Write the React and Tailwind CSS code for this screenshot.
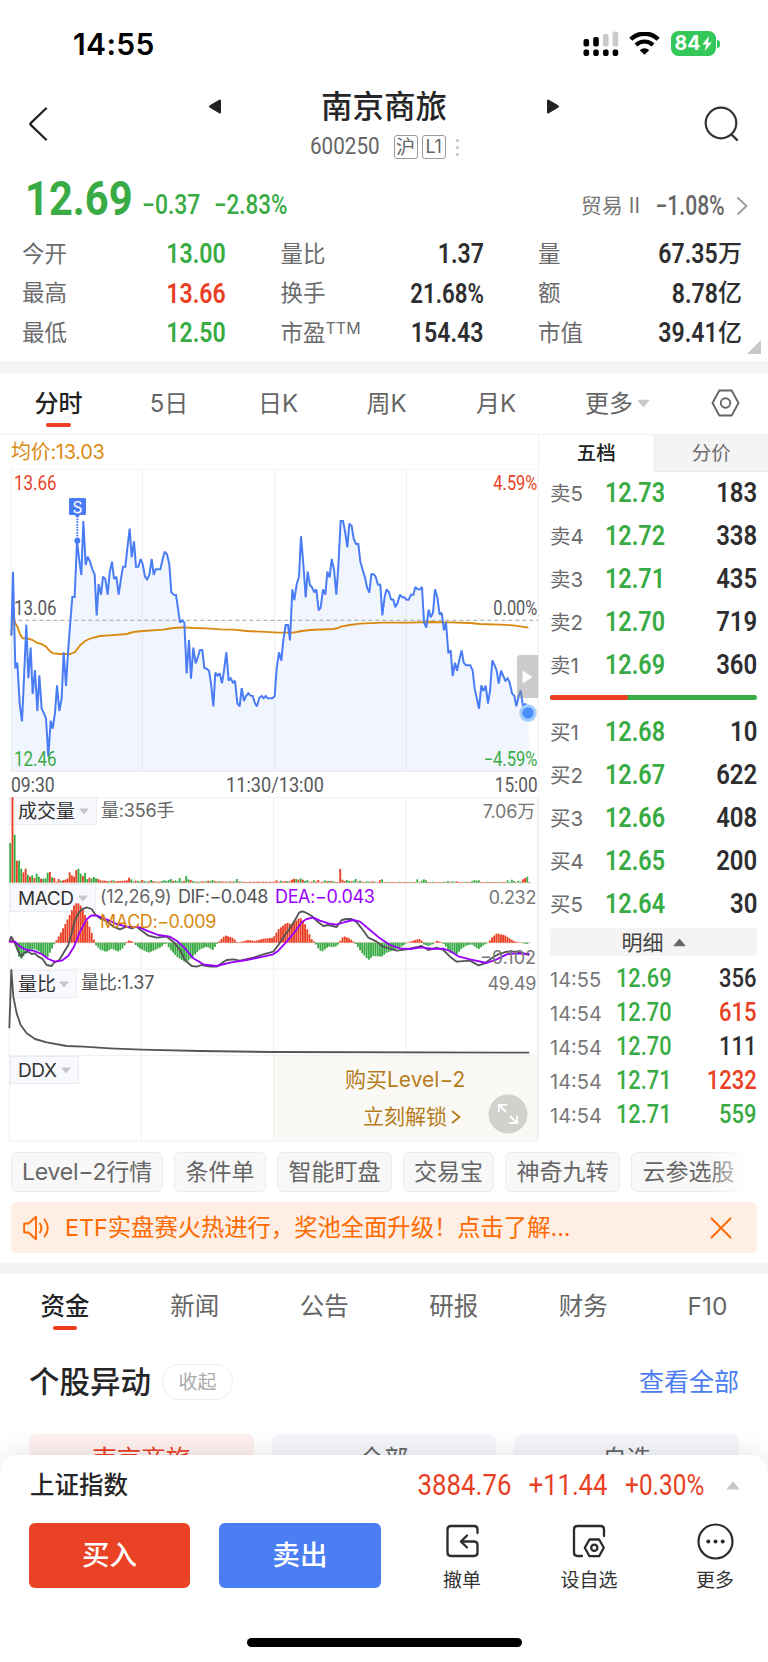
import React from "react";

const GREEN = "text-[#39ab44]";
const RED = "text-[#e93f24]";
const DARK = "text-[#2e2e30]";

const PRICE =
  "34,527 39,335 46,625 52,608 59,730 66,784 72,655 79,494 85,655 92,563 98,702 105,630 112,753 118,646 125,746 131,758 138,775 145,890 152,782 158,806 165,758 171,676 178,753 185,715 191,577 198,678 204,577 211,485 217,411 224,411 231,242 237,295 244,345 250,183 257,315 263,290 270,305 277,328 284,343 290,466 296,372 303,404 309,350 316,357 323,404 329,338 336,305 342,357 349,350 356,404 362,362 369,320 376,320 382,265 389,206 395,292 402,244 408,320 415,320 422,297 428,312 435,350 441,358 448,345 455,297 461,345 467,328 481,328 488,298 494,275 501,283 508,313 514,397 521,404 528,405 534,445 540,488 547,481 553,488 560,640 567,540 573,656 580,563 587,610 593,593 600,570 607,570 613,624 620,626 627,632 633,670 640,739 646,638 653,647 659,640 666,670 672,632 679,577 686,662 692,655 699,668 705,662 712,730 719,739 725,684 732,723 738,708 745,700 752,707 758,708 765,730 771,739 778,714 785,708 791,715 797,708 804,715 817,715 824,709 830,625 837,577 844,602 850,540 857,495 864,495 870,541 877,388 883,420 890,373 897,350 903,229 910,312 917,412 923,335 930,375 936,382 943,397 949,388 956,451 962,443 969,388 976,404 982,335 989,352 995,297 1002,328 1009,404 1015,320 1022,183 1029,183 1035,213 1042,262 1048,191 1055,198 1061,236 1068,252 1075,252 1081,305 1088,330 1095,352 1101,382 1108,398 1114,343 1121,343 1127,350 1134,374 1141,374 1147,466 1154,410 1160,388 1167,397 1173,418 1180,419 1186,442 1193,427 1200,404 1207,412 1213,412 1220,419 1226,419 1233,404 1240,404 1246,381 1253,388 1260,388 1266,381 1272,487 1279,503 1286,449 1292,472 1299,458 1305,388 1312,412 1319,464 1325,458 1332,511 1338,487 1345,579 1352,571 1358,648 1365,608 1371,632 1378,600 1385,571 1391,608 1398,616 1411,616 1418,632 1424,686 1431,718 1437,746 1444,676 1450,693 1457,677 1464,731 1470,693 1477,601 1484,616 1490,632 1496,671 1503,632 1510,648 1516,662 1523,655 1529,668 1536,700 1543,708 1549,739 1556,708 1562,691 1569,739 1576,731 1585,760";
const AVG =
  "34,525 39,455 45,488 52,500 60,522 68,535 78,535 88,537 98,540 110,548 125,552 138,560 150,574 160,580 185,582 210,582 225,576 240,556 255,543 275,534 300,528 330,526 380,522 400,516 430,513 490,509 520,504 550,502 580,504 620,505 660,508 700,509 740,513 780,515 837,518 880,518 905,513 930,510 1000,507 1016,504 1022,500 1050,495 1080,491 1150,488 1230,488 1290,486 1350,487 1410,489 1440,492 1500,494 1540,496 1585,503";
const DIF =
  "28,470 34,455 45,475 55,500 65,515 72,503 85,500 95,507 105,505 115,515 128,522 140,540 155,543 162,533 178,525 190,505 205,480 215,445 225,405 235,385 245,373 260,367 275,372 285,388 300,400 320,408 340,425 360,433 380,425 395,430 410,425 425,437 445,452 470,458 500,455 520,470 540,495 555,525 575,543 590,545 605,540 630,545 650,545 665,535 680,525 700,523 720,527 760,518 790,508 820,500 835,480 855,450 870,430 885,405 898,382 908,379 920,384 935,393 955,412 970,423 985,420 1010,426 1025,405 1040,402 1055,402 1070,412 1085,430 1105,458 1130,470 1150,485 1190,497 1220,493 1265,483 1285,495 1310,488 1330,495 1350,515 1370,530 1410,527 1435,541 1455,535 1475,520 1495,508 1520,500 1550,500 1588,510";
const DEA =
  "28,470 45,470 60,485 80,495 100,497 125,507 145,522 165,530 185,527 205,512 222,485 240,440 260,403 275,391 290,392 320,403 350,417 380,425 420,427 440,437 475,450 510,455 530,467 555,490 580,520 610,538 650,543 690,533 740,525 790,515 820,508 835,497 860,470 885,440 905,412 920,402 940,398 960,407 985,415 1010,419 1035,411 1060,405 1080,410 1110,435 1140,460 1170,480 1200,490 1230,492 1265,487 1300,492 1330,491 1350,498 1375,514 1410,523 1460,534 1490,523 1520,508 1550,505 1588,507";
const RATIO =
  "28,730 34,555 40,635 50,685 62,720 80,745 105,762 140,772 200,783 250,785 330,790 425,794 600,798 820,801 1588,803";

const VOLUME = [
  "g119", "r256", "g144", "r66", "g66", "g42", "r31", "r42", "g24", "r18", "g22", "r14", "g27", "g18", "r12", "g12", "g13", "g30", "r32", "g16", "r14", "r3",
  "r11", "g6", "r7", "r9", "r12", "r31", "r22", "r18", "r38", "g42", "g27", "r20", "g29", "g11", "r15", "g12", "g17", "g13", "r11", "r7", "r6", "r6", "r5", "g4",
  "r6", "g7", "r4", "r5", "r5", "r6", "r6", "r7", "r15", "g10", "g4", "r6", "g5", "g4", "r8", "g5", "g3", "r4", "g8", "r5", "g3", "r3", "r3", "g5", "g7", "g5",
  "g8", "g11", "r5", "g7", "g5", "g14", "g4", "r5", "g20", "g10", "r8", "g5", "g3", "r3", "g3", "r4", "r3", "g4", "r6", "g5", "g8", "r4", "r3", "g4", "r4",
  "r3", "r3", "g3", "r4", "r3", "g4", "g11", "r3", "g3", "r3", "r2", "r2", "r3", "r2", "r3", "r3", "r3", "r2", "r3", "r3", "r2", "r3", "r2", "r3", "r7",
  "r3", "g6", "r3", "r5", "g5", "r4", "r9", "r12", "g11", "r9", "g13", "r9", "g5", "g8", "r3", "r3", "g7", "r3", "r8", "r2", "r3", "g7", "r4", "g5", "r5",
  "g4", "r2", "r2", "r41", "r9", "r5", "g8", "g5", "r4", "g6", "g11", "r3", "g6", "r3", "r2", "g4", "g3", "r3", "r4", "g3", "r2", "r7", "g10", "r2",
];
const LATE = { 185: "g10", 187: "g6", 188: "g10", 189: "g7", 199: "g5", 201: "g4", 203: "r4", 210: "g5", 211: "g8", 212: "g6", 213: "g7", 226: "g7", 228: "g9", 229: "g5", 231: "g6", 233: "r10", 234: "r14", 235: "g18" };

const HIST = [
  [28, 0], [34, 22], [40, 4], [47, -10], [60, -52], [75, -35], [100, -18], [120, -28], [140, -48], [160, -10], [165, 0], [185, 35], [205, 75], [225, 118],
  [235, 118], [245, 108], [262, 65], [280, 15], [285, -5], [300, -20], [318, -28], [335, -18], [355, -27], [370, -15], [378, 0], [385, 7], [398, 4],
  [402, -3], [420, -18], [445, -30], [465, -22], [485, -12], [497, 0], [510, -20], [530, -42], [558, -60], [575, -45], [600, -20], [620, -12], [638, -22],
  [650, -5], [655, 2], [675, 22], [700, 14], [712, 0], [745, 8], [765, 5], [790, 12], [820, 15], [835, 40], [860, 60], [875, 55], [900, 76], [915, 55],
  [935, 10], [945, 0], [955, -18], [965, -28], [985, -12], [1005, -13], [1015, -5], [1020, 5], [1030, 20], [1050, 12], [1062, 2], [1070, -8], [1085, -30],
  [1105, -52], [1120, -40], [1145, -42], [1160, -30], [1200, -15], [1222, 0], [1245, 8], [1262, 12], [1270, -5], [1285, -10], [1300, -4], [1310, 6],
  [1325, 1], [1335, -8], [1350, -30], [1370, -35], [1385, -18], [1400, -8], [1415, -5], [1435, -20], [1450, -8], [1465, 0], [1475, 15], [1490, 28],
  [1515, 22], [1540, 5], [1560, 0], [1588, -5],
];
function histAt(x) {
  for (let i = 1; i < HIST.length; i++) {
    if (x <= HIST[i][0]) {
      const [x0, y0] = HIST[i - 1];
      const [x1, y1] = HIST[i];
      return y0 + ((y1 - y0) * (x - x0)) / (x1 - x0);
    }
  }
  return 0;
}
const BAR_COUNT = 237;
const BARS = Array.from({ length: BAR_COUNT }, (_, i) => i);
function volumeAt(i) {
  return LATE[i] || VOLUME[i] || (i % 5 === 2 ? "g3" : "r2");
}

function Num({ children, className = "" }) {
  return (
    <span className={`inline-block whitespace-nowrap font-['Roboto','Noto_Sans_CJK_SC',sans-serif] leading-none ${className}`}>
      {children}
    </span>
  );
}

function Caret({ className = "" }) {
  return (
    <svg viewBox="0 0 12 8" className={className}>
      <path d="M1 1h10L6 7z" fill="currentColor" stroke="currentColor" strokeLinejoin="round" />
    </svg>
  );
}

function StatusBar() {
  return (
    <div className="flex h-[87px] items-center pl-[73px] pr-[48px] text-black">
      <span className="w-[90px] text-[30px] font-semibold leading-none tracking-[.012em]">14:55</span>
      <svg className="ml-auto h-[26px] w-[36px]" viewBox="0 0 36 26">
        <g fill="#000">
          <rect x="0.5" y="8" width="5.6" height="7.5" rx="2" />
          <rect x="10.2" y="6" width="5.6" height="9.5" rx="2" />
          <rect x="0.5" y="18.5" width="5.6" height="6.5" rx="2" />
          <rect x="10.2" y="18.5" width="5.6" height="6.5" rx="2" />
          <rect x="20" y="18.5" width="5.6" height="6.5" rx="2" />
          <rect x="29.6" y="18.5" width="5.6" height="6.5" rx="2" />
        </g>
        <rect x="20" y="3" width="5.6" height="12.5" rx="2" fill="#c9c9c9" />
        <rect x="29.6" y="0.5" width="5.6" height="15" rx="2" fill="#c9c9c9" />
      </svg>
      <svg className="ml-[10px] h-[23px] w-[31px]" viewBox="0 0 31 23">
        <path d="M1.800 7.300a19.600 19.600 0 0 1 27.400 0" fill="none" stroke="#000" strokeWidth="4.400" />
        <path d="M7 13a12.200 12.200 0 0 1 17 0" fill="none" stroke="#000" strokeWidth="4" />
        <path d="M10.800 18.200a6.800 6.800 0 0 1 9.400 0L15.500 22.800z" />
      </svg>
      <div className="ml-[11px] flex items-center">
        <div className="flex h-[25px] w-[45px] items-center justify-center rounded-[7.5px] bg-[#34c759] text-[19.500px] font-bold leading-none text-white">
          84
          <svg className="ml-[2px] h-[15px] w-[10px]" viewBox="0 0 10 15">
            <path d="M7.200 0L.2 8.400h3.900L2.800 15l7-8.500H5.900z" fill="#fff" />
          </svg>
        </div>
        <div className="ml-[1px] h-[8px] w-[3px] rounded-r-full bg-[#34c759]" />
      </div>
    </div>
  );
}

function NavBar() {
  return (
    <header className="flex h-[84px] px-[28px] text-[#262628]">
      <svg className="mt-[20px] h-[34px] w-[20px]" viewBox="0 0 20 34">
        <path d="M18 1.500L3 15.800Q1.800 17 3 18.200L18 32.500" fill="none" stroke="#222" strokeWidth="2.300" strokeLinecap="round" />
      </svg>
      <div className="ml-[160px] flex w-[352px] justify-between">
        <svg className="mt-[11px] h-[17px] w-[14px]" viewBox="0 0 14 17">
          <path d="M12.500 2.500v12q0 1-1 .4L1.800 9.200q-1-.7 0-1.400L11.500 2.100q1-.6 1 .4z" fill="#222" stroke="#222" />
        </svg>
        <div className="flex flex-col items-center">
          <h1 className="mt-[3px] text-[31.500px] font-medium leading-[34px]">南京商旅</h1>
          <div className="mt-[11px] flex h-[24px] items-center text-[#666]">
            <span className="w-[70px]">
              <Num className="origin-left scale-x-[.86] text-[24px]">600250</Num>
            </span>
            <span className="ml-[14px] flex size-[24px] items-center justify-center rounded-[3px] border border-[#999] text-[19px] leading-none">沪</span>
            <span className="ml-[4px] flex size-[24px] items-center justify-center rounded-[3px] border border-[#999] text-[18px] leading-none tracking-[-.02em]">L1</span>
            <span className="ml-[10px] flex flex-col gap-[4px]">
              <i className="size-[3px] rounded-full bg-[#c4c4c4]" />
              <i className="size-[3px] rounded-full bg-[#c4c4c4]" />
              <i className="size-[3px] rounded-full bg-[#c4c4c4]" />
            </span>
          </div>
        </div>
        <svg className="mt-[11px] h-[17px] w-[14px]" viewBox="0 0 14 17">
          <path d="M1.500 2.500v12q0 1 1 .4L12.200 9.200q1-.7 0-1.400L2.500 2.100q-1-.6-1 .4z" fill="#222" stroke="#222" />
        </svg>
      </div>
      <svg className="ml-auto mt-[19px] h-[36px] w-[37px]" viewBox="0 0 37 36">
        <circle cx="18" cy="17" r="15.300" fill="none" stroke="#333" strokeWidth="2.200" />
        <path d="M28.500 28.500l5.500 5.300" stroke="#333" strokeWidth="2.400" strokeLinecap="round" />
      </svg>
    </header>
  );
}

function PriceLine() {
  return (
    <div className="flex h-[60px] items-end pb-[11px] pl-[25px] pr-[20px]">
      <span className={`w-[117px] ${GREEN}`}>
        <Num className="origin-left translate-y-[3px] scale-x-[.85] text-[49px] font-bold">12.69</Num>
      </span>
      <span className={`w-[72px] ${GREEN}`}>
        <Num className="origin-left scale-x-[.85] text-[27px] font-medium">−0.37</Num>
      </span>
      <span className={`w-[76px] ${GREEN}`}>
        <Num className="origin-left scale-x-[.83] text-[27px] font-medium">−2.83%</Num>
      </span>
      <span className="ml-auto mb-[2px] mr-[16px] text-[21px] leading-[24px] text-[#777]">贸易 Ⅱ</span>
      <span className="flex w-[69px] justify-end text-[#666]">
        <Num className="origin-right scale-x-[.78] text-[27px] font-medium">−1.08%</Num>
      </span>
      <svg className="mb-[4px] ml-[11px] h-[20px] w-[12px]" viewBox="0 0 12 20">
        <path d="M1.500 1.500L10.500 10l-9 8.500" fill="none" stroke="#999" strokeWidth="1.800" />
      </svg>
    </div>
  );
}

const QUOTES = [
  [["今开", "13.00", GREEN], ["量比", "1.37", DARK], ["量", "67.35", DARK, "万"]],
  [["最高", "13.66", RED], ["换手", "21.68%", DARK], ["额", "8.78", DARK, "亿"]],
  [["最低", "12.50", GREEN], ["市盈", "154.43", DARK], ["市值", "39.41", DARK, "亿"]],
];

function QuoteGrid() {
  return (
    <div className="relative h-[130px] pt-[3px]">
      {QUOTES.map((row, r) => (
        <div key={r} className="grid h-[39.500px] grid-cols-[204px_203px_204px] gap-x-[54.500px] pl-[22px]">
          {row.map(([label, value, color, unit]) => (
            <div key={label} className="flex items-center justify-between">
              <span className="flex items-center text-[22.500px] leading-none text-[#6b6b6d]">
                {label}
                {label === "市盈" && <sup className="top-[-5px] text-[16px] leading-none">TTM</sup>}
              </span>
              <span className={`flex items-center ${color}`}>
                <Num className={`origin-right text-[27.500px] font-semibold ${value.includes("%") ? "scale-x-[.81]" : "scale-x-[.84]"}`}>{value}</Num>
                {unit && <span className="text-[24px] font-medium leading-none">{unit}</span>}
              </span>
            </div>
          ))}
        </div>
      ))}
      <svg className="absolute bottom-[7px] right-[7px] h-[14px] w-[14px]" viewBox="0 0 14 14">
        <path d="M14 0v14H0z" fill="#c8c8c8" />
      </svg>
    </div>
  );
}

function PeriodTabs() {
  return (
    <nav className="flex h-[62px] items-center border-b border-[#f1f1f1] text-[24px] leading-none text-[#666]">
      <span className="relative flex w-[117px] justify-center font-medium text-[#222]">
        分时
        <i className="absolute -bottom-[11px] h-[4px] w-[25px] rounded-full bg-[#ee3d22]" />
      </span>
      <span className="w-[104px] text-center">5日</span>
      <span className="w-[114px] text-center">日K</span>
      <span className="w-[103px] text-center">周K</span>
      <span className="w-[116px] text-center">月K</span>
      <span className="ml-[31px] flex w-[70px] items-center">
        更多
        <Caret className="ml-[4px] h-[9px] w-[13px] shrink-0 text-[#c8c8c8]" />
      </span>
      <svg className="mb-[2px] ml-[56px] h-[28px] w-[29px]" viewBox="0 0 29 28">
        <path d="M8.300 1.500h12.400L27.500 14l-6.800 12.500H8.300L1.500 14z" fill="none" stroke="#666" strokeWidth="1.900" strokeLinejoin="round" />
        <circle cx="14.500" cy="14" r="4.700" fill="none" stroke="#666" strokeWidth="1.900" />
      </svg>
    </nav>
  );
}

function ChartNum({ children, className }) {
  return <Num className={`absolute text-[19.500px] ${className}`}>{children}</Num>;
}

function PriceChart() {
  return (
    <div className="relative h-[328px]">
      <svg className="block h-[328px] w-[538px]" viewBox="0 27 1614 984">
        <g stroke="#efefef" strokeWidth="3" fill="none">
          <path d="M34 27H1614V934H34zM427 27V934M824 27V934M1219 27V934" />
        </g>
        <polygon points={`34,934 ${PRICE} 1588,934`} fill="#4a7df5" fillOpacity=".08" />
        <path d="M34 481H1614" stroke="#b4b4b4" strokeWidth="4" strokeDasharray="12 9" />
        <polyline points={AVG} fill="none" stroke="#d8890f" strokeWidth="5.500" />
        <polyline points={PRICE} fill="none" stroke="#4a7df5" strokeWidth="6" strokeLinejoin="miter" strokeMiterlimit="2" />
        <path d="M232 176V242" stroke="#fff" strokeWidth="7" />
        <path d="M232 176V242" stroke="#4a7df5" strokeWidth="6" strokeDasharray="5 3" />
        <circle cx="232" cy="242" r="9" fill="#4a7df5" />
        <path d="M211 114h43q4 0 4 4v43q0 4-4 4h-14l-8 10-8-10h-13q-4 0-4-4v-43q0-4 4-4z" fill="#4a7df5" />
      </svg>
      <span className="absolute left-[69px] top-[30px] w-[17px] text-center text-[15.500px] leading-[17px] text-white">S</span>
      <ChartNum className={`left-[14px] top-[5px] origin-left scale-x-[.87] ${RED}`}>13.66</ChartNum>
      <ChartNum className="left-[14px] top-[130px] origin-left scale-x-[.87] text-[#58585a]">13.06</ChartNum>
      <ChartNum className={`left-[14px] top-[281px] origin-left scale-x-[.87] ${GREEN}`}>12.46</ChartNum>
      <ChartNum className={`right-[1px] top-[5px] origin-right scale-x-[.84] ${RED}`}>4.59%</ChartNum>
      <ChartNum className="right-[1px] top-[130px] origin-right scale-x-[.84] text-[#58585a]">0.00%</ChartNum>
      <ChartNum className={`right-[1px] top-[281px] origin-right scale-x-[.85] ${GREEN}`}>−4.59%</ChartNum>
      <ChartNum className="left-[11px] top-[307px] origin-left scale-x-[.9] text-[#58585a]">09:30</ChartNum>
      <ChartNum className="left-[275px] top-[307px] -translate-x-1/2 scale-x-[.93] text-[#58585a]">11:30/13:00</ChartNum>
      <ChartNum className="right-0 top-[307px] origin-right scale-x-[.88] text-[#58585a]">15:00</ChartNum>
      <div className="absolute right-0 top-[186px] flex h-[43px] w-[21px] items-center justify-center rounded-l-[4px] bg-[#8c8c8c]/45">
        <svg className="h-[14px] w-[11px]" viewBox="0 0 11 14">
          <path d="M.5.500v13L10.500 7z" fill="#fff" />
        </svg>
      </div>
      <svg className="absolute left-[519px] top-[235px] size-[18px]" viewBox="0 0 18 18">
        <circle cx="9" cy="9" r="8.700" fill="#a5cdfb" />
        <circle cx="9" cy="9" r="5.700" fill="#4a90fa" />
      </svg>
    </div>
  );
}

function PanelTag({ children, className }) {
  return (
    <span className={`absolute left-[10px] flex h-[28px] items-center justify-between border border-[#ebecf0] bg-[#f7f8fe]/90 pl-[7px] pr-[7px] text-[19px] leading-none text-[#333] ${className}`}>
      {children}
      <Caret className="h-[7px] w-[10px] shrink-0 text-[#c6c6c8]" />
    </span>
  );
}

function PanelText({ children, className }) {
  return <span className={`absolute whitespace-nowrap text-[18px] leading-[20px] ${className}`}>{children}</span>;
}

function IndicatorPanels() {
  return (
    <div className="relative h-[345px]">
      <svg className="absolute left-0 top-0 h-[345px] w-[539px]" viewBox="0 36 1617 1035">
        <path d="M821 811H1612V1068H821z" fill="#fbf9f5" />
        <path d="M28 37H1612V1068H28zM424 37V1068M821 37V1068M1218 37V811M28 295H1612M28 552H1612M28 811H1612" stroke="#efefef" strokeWidth="3" fill="none" />
      </svg>
      <PanelTag className="top-[0px] w-[87px]">成交量</PanelTag>
      <PanelTag className="top-[87px] w-[86px] tracking-[-.02em]">MACD</PanelTag>
      <PanelTag className="top-[173px] w-[67px]">量比</PanelTag>
      <PanelTag className="top-[259px] w-[69px] tracking-[-.02em]">DDX</PanelTag>
      <svg className="absolute left-0 top-0 h-[345px] w-[539px]" viewBox="0 36 1617 1035">
        {BARS.map((i) => {
          const v = volumeAt(i);
          const h = Number(v.slice(1));
          return <rect key={i} x={28 + i * 6.6} y={293 - h} width="5.600" height={h} fill={v[0] === "g" ? "#39ab44" : "#e93f24"} />;
        })}
        <path d="M28 473H1588" stroke="#eda08e" strokeWidth="1.500" />
        {BARS.map((i) => {
          const h = histAt(30.6 + i * 6.6);
          return <rect key={i} x={28 + i * 6.6} y={h > 0 ? 473 - h : 473} width="5.600" height={Math.max(1, Math.abs(h))} fill={h > 0 ? "#e93f24" : "#39ab44"} />;
        })}
        <polyline points={DIF} fill="none" stroke="#555" strokeWidth="5.500" strokeLinejoin="round" />
        <polyline points={DEA} fill="none" stroke="#9a00ff" strokeWidth="5.500" strokeLinejoin="round" />
        <polyline points={RATIO} fill="none" stroke="#555" strokeWidth="5.500" strokeLinejoin="round" />
      </svg>
      <PanelText className="left-[101px] top-[4px] tracking-[-.01em] text-[#666]">量:356手</PanelText>
      <PanelText className="right-[3px] top-[5px] tracking-[-.01em] text-[#777]">7.06万</PanelText>
      <PanelText className="left-[100px] top-[90px] tracking-[-.02em] text-[#666]">(12,26,9)</PanelText>
      <PanelText className="left-[178px] top-[90px] tracking-[-.03em] text-[#555]">DIF:−0.048</PanelText>
      <PanelText className="left-[275px] top-[90px] tracking-[-.02em] text-[#9a00ff]">DEA:−0.043</PanelText>
      <PanelText className="left-[100px] top-[115px] tracking-[-.025em] text-[#d8890f]">MACD:−0.009</PanelText>
      <PanelText className="right-[2px] top-[91px] tracking-[-.02em] text-[#777]">0.232</PanelText>
      <PanelText className="right-[2px] top-[151px] text-[#777]">−0.102</PanelText>
      <PanelText className="left-[81px] top-[176px] tracking-[-.01em] text-[#555]">量比:1.37</PanelText>
      <PanelText className="right-[2px] top-[177px] tracking-[-.02em] text-[#777]">49.49</PanelText>
      <span className="absolute left-[345px] top-[271px] whitespace-nowrap text-[21px] leading-[24px] text-[#b57c1c]">购买Level−2</span>
      <span className="absolute left-[363px] top-[308px] flex items-center whitespace-nowrap text-[21px] leading-[24px] text-[#b57c1c]">
        立刻解锁
        <svg className="ml-[4px] h-[14px] w-[10px]" viewBox="0 0 10 14">
          <path d="M1 1l7.500 6L1 13" fill="none" stroke="#b57c1c" strokeWidth="1.800" />
        </svg>
      </span>
      <svg className="absolute left-[488px] top-[297px] size-[40px]" viewBox="0 0 40 40">
        <circle cx="20" cy="20" r="19.600" fill="#d3d1cd" />
        <path d="M18 18l-7-7M10.800 18v-7.200H19M22 22l7 7M29.200 21.500v7.700H21" fill="none" stroke="#fff" strokeWidth="1.800" />
      </svg>
    </div>
  );
}

const SELLS = [["卖5", "12.73", "183"], ["卖4", "12.72", "338"], ["卖3", "12.71", "435"], ["卖2", "12.70", "719"], ["卖1", "12.69", "360"]];
const BUYS = [["买1", "12.68", "10"], ["买2", "12.67", "622"], ["买3", "12.66", "408"], ["买4", "12.65", "200"], ["买5", "12.64", "30"]];
const TICKS = [["14:55", "12.69", "356", DARK], ["14:54", "12.70", "615", RED], ["14:54", "12.70", "111", DARK], ["14:54", "12.71", "1232", RED], ["14:54", "12.71", "559", GREEN]];

function Level({ row }) {
  return (
    <div className="flex h-[43px] items-center pl-[11px] pr-[11px]">
      <span className="mt-[3px] w-[55px] text-[20.500px] leading-none text-[#6b6b6d]">{row[0]}</span>
      <Num className={`origin-left scale-x-[.85] text-[27.500px] font-semibold ${GREEN}`}>{row[1]}</Num>
      <Num className={`ml-auto origin-right scale-x-[.87] text-[27.500px] font-semibold ${DARK}`}>{row[2]}</Num>
    </div>
  );
}

function OrderBook() {
  return (
    <aside className="w-[230px] border-l border-[#f3f3f3]">
      <div className="grid h-[36px] grid-cols-2 text-[19.500px] leading-[36px]">
        <span className="text-center font-medium text-[#222]">五档</span>
        <span className="border-b border-l border-[#ececec] bg-[#f4f4f4] text-center text-[#6b6b6d]">分价</span>
      </div>
      <div>{SELLS.map((r) => <Level key={r[0]} row={r} />)}</div>
      <div className="mx-[11px] mt-[9px] flex h-[5px] overflow-hidden rounded-full bg-[#39ab44]">
        <div className="w-[78px] rounded-r-full bg-[#ee3d22]" />
      </div>
      <div className="pt-[10px]">{BUYS.map((r) => <Level key={r[0]} row={r} />)}</div>
      <div className="mx-[11px] mt-[3px] flex h-[28px] items-center justify-center rounded-[3px] bg-[#f4f4f4] text-[21px] leading-none text-[#444]">
        明细
        <Caret className="ml-[9px] h-[9px] w-[13px] rotate-180 text-[#666]" />
      </div>
      <div className="pt-[5px]">
        {TICKS.map((t, i) => (
          <div key={i} className="flex h-[34px] items-center px-[11px]">
            <span className="mt-[3px] w-[66px] text-[20px] leading-none text-[#777]">{t[0]}</span>
            <Num className={`origin-left scale-x-[.87] text-[25px] font-medium ${GREEN}`}>{t[1]}</Num>
            <Num className={`ml-auto origin-right scale-x-[.88] text-[25px] font-medium ${t[3]}`}>{t[2]}</Num>
          </div>
        ))}
      </div>
    </aside>
  );
}

const CHIP = "flex h-[40px] shrink-0 items-center justify-center rounded-[6px] border border-[#ececec] bg-[#f8f8f8]";

function Chips() {
  return (
    <div className="relative flex h-[61px] gap-[11px] overflow-hidden pl-[11px] pt-[11px] text-[23px] leading-none text-[#666]">
      <span className={`${CHIP} w-[152px] tracking-[-.01em]`}>Level−2行情</span>
      <span className={`${CHIP} w-[92px]`}>条件单</span>
      <span className={`${CHIP} w-[115px]`}>智能盯盘</span>
      <span className={`${CHIP} w-[91px]`}>交易宝</span>
      <span className={`${CHIP} w-[115px]`}>神奇九转</span>
      <span className={`${CHIP} w-[115px]`}>云参选股</span>
      <span className={`${CHIP} w-[60px]`} />
      <div className="absolute right-0 top-0 h-full w-[60px] bg-gradient-to-r from-white/0 to-white to-75%" />
    </div>
  );
}

function Banner() {
  return (
    <div className="mx-[11px] flex h-[51px] items-center rounded-[6px] bg-[#feeee3] pl-[12px] pr-[25px] text-[#ff6a00]">
      <svg className="h-[26px] w-[27px]" viewBox="0 0 27 26" fill="none" stroke="#ff6a00" strokeWidth="1.900" strokeLinejoin="round" strokeLinecap="round">
        <path d="M1.200 8.500h4.300L13 1.800v22.400l-7.500-6.700H1.200z" />
        <path d="M17 8.500q2.800 4.500 0 9M21.500 4.500q6.500 8.500 0 17" />
      </svg>
      <span className="ml-[15px] text-[23.300px] leading-none">ETF实盘赛火热进行，奖池全面升级！点击了解...</span>
      <svg className="ml-auto h-[22px] w-[22px]" viewBox="0 0 22 22">
        <path d="M1 1l20 20M21 1L1 21" stroke="#ff6a00" strokeWidth="1.900" />
      </svg>
    </div>
  );
}

function InfoTabs() {
  return (
    <nav className="flex h-[64px] items-center text-[24.500px] leading-none text-[#666]">
      <span className="relative flex w-[130px] justify-center font-medium text-[#222]">
        资金
        <i className="absolute -bottom-[12px] h-[4px] w-[24px] rounded-full bg-[#ee3d22]" />
      </span>
      {["新闻", "公告", "研报", "财务", "F10"].map((t) => (
        <span key={t} className="w-[129.500px] shrink-0 text-center last:w-[119px]">{t}</span>
      ))}
    </nav>
  );
}

function BottomSheet() {
  return (
    <footer className="relative h-[207px] rounded-t-[18px] bg-white shadow-[0_-4px_24px_rgba(0,0,0,0.09)]">
      <div className="flex h-[60px] items-center pl-[30px] pr-[28px]">
        <span className="text-[24.500px] font-medium leading-none text-[#262628]">上证指数</span>
        <span className={`ml-auto flex w-[93px] justify-end ${RED}`}>
          <Num className="origin-right scale-x-[.89] text-[29px] font-[450]">3884.76</Num>
        </span>
        <span className={`ml-[18px] flex w-[78px] justify-end ${RED}`}>
          <Num className="origin-right scale-x-[.88] text-[29px] font-[450]">+11.44</Num>
        </span>
        <span className={`ml-[17px] flex w-[80px] justify-end ${RED}`}>
          <Num className="origin-right scale-x-[.84] text-[29px] font-[450]">+0.30%</Num>
        </span>
        <Caret className="ml-[22px] h-[9px] w-[14px] rotate-180 text-[#c8c8c8]" />
      </div>
      <div className="flex h-[76px] items-start pl-[29px] pt-[8px]">
        <button className="h-[65px] w-[161px] rounded-[6px] bg-[#e94224] text-[27.500px] font-medium leading-none text-white">买入</button>
        <button className="ml-[29px] h-[65px] w-[162px] rounded-[6px] bg-[#4b7df3] text-[27.500px] font-medium leading-none text-white">卖出</button>
        <div className="ml-[51px] flex w-[60px] flex-col items-center text-[19px] leading-none text-[#333]">
          <svg className="h-[36px] w-[36px]" viewBox="0 0 36 36" fill="none" stroke="#2b2b2d" strokeWidth="2.300" strokeLinecap="round" strokeLinejoin="round">
            <path d="M33.500 10V6.500q0-3.500-3.500-3.500H7Q3.500 3 3.500 6.500v23q0 3.500 3.500 3.500h23q3.500 0 3.500-3.500V22q0-3.500-3.500-3.500H17" />
            <path d="M23 12.500l-6 6 6 6" />
          </svg>
          <span className="mt-[12px]">撤单</span>
        </div>
        <div className="ml-[67px] flex w-[60px] flex-col items-center text-[19px] leading-none text-[#333]">
          <svg className="h-[36px] w-[36px]" viewBox="0 0 36 36" fill="none" stroke="#2b2b2d" strokeWidth="2.300" strokeLinecap="round" strokeLinejoin="round">
            <path d="M33 13V6.500Q33 3 29.500 3h-23Q3 3 3 6.500v23Q3 33 6.500 33H11" />
            <path d="M18.500 16.500h9.600l4.700 8.300-4.700 8.400h-9.600l-4.700-8.400z" />
            <circle cx="23.300" cy="24.800" r="3.100" />
          </svg>
          <span className="mt-[12px] whitespace-nowrap">设自选</span>
        </div>
        <div className="ml-[66px] flex w-[60px] flex-col items-center text-[19px] leading-none text-[#333]">
          <svg className="h-[37px] w-[37px]" viewBox="0 0 37 37">
            <circle cx="18.500" cy="18.500" r="17" fill="none" stroke="#2b2b2d" strokeWidth="2.200" />
            <g fill="#2b2b2d">
              <circle cx="11.300" cy="18.500" r="2" />
              <circle cx="18.500" cy="18.500" r="2" />
              <circle cx="25.700" cy="18.500" r="2" />
            </g>
          </svg>
          <span className="mt-[11px]">更多</span>
        </div>
      </div>
      <div className="mx-auto mt-[47px] h-[9px] w-[275px] rounded-full bg-black" />
    </footer>
  );
}

export default function App() {
  return (
    <div className="flex h-[1662px] w-[768px] flex-col overflow-hidden bg-white font-['Inter','Noto_Sans_CJK_SC',sans-serif] text-[#333]">
      <StatusBar />
      <NavBar />
      <PriceLine />
      <QuoteGrid />
      <div className="h-[12px] bg-[#f4f4f4]" />
      <PeriodTabs />
      <main className="flex h-[706px]">
        <section className="w-[538px]">
          <div className="h-[34px] pl-[11px] pt-[6px] text-[20px] leading-[22px] tracking-[-.015em] text-[#dc8c14]">均价:13.03</div>
          <PriceChart />
          <IndicatorPanels />
        </section>
        <OrderBook />
      </main>
      <Chips />
      <Banner />
      <div className="mt-[10px] h-[11px] shrink-0 bg-[#f4f4f4]" />
      <InfoTabs />
      <div className="flex h-[88px] shrink-0 items-center pl-[29px] pr-[29px]">
        <h2 className="text-[30.500px] font-medium leading-none text-[#262628]">个股异动</h2>
        <span className="ml-[11px] flex h-[36px] w-[71px] items-center justify-center rounded-full border border-[#ececec] text-[19px] leading-none text-[#aaa]">收起</span>
        <span className="ml-auto text-[25px] leading-none text-[#4b7df3]">查看全部</span>
      </div>
      <div className="grid h-[29px] shrink-0 grid-cols-3 gap-[18px] overflow-hidden pl-[29px] pr-[29px] pt-[8px] text-[24.500px]">
        <span className={`h-[51px] rounded-t-[7px] bg-[#fdf0ee] text-center leading-[51px] ${RED}`}>南京商旅</span>
        <span className="h-[51px] rounded-t-[7px] bg-[#f5f6fb] text-center leading-[51px] text-[#666]">全部</span>
        <span className="h-[51px] rounded-t-[7px] bg-[#f5f6fb] text-center leading-[51px] text-[#666]">自选</span>
      </div>
      <BottomSheet />
    </div>
  );
}
